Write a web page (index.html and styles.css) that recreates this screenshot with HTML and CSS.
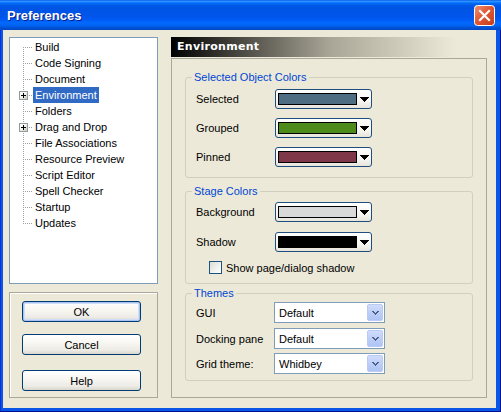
FILE: index.html
```html
<!DOCTYPE html>
<html>
<head>
<meta charset="utf-8">
<title>Preferences</title>
<link rel="stylesheet" href="styles.css">
</head>
<body>
<div class="window">
  <div class="titlebar">
    <span class="title">Preferences</span>
    <span class="close">
      <svg width="21" height="21" viewBox="0 0 21 21">
        <defs>
          <linearGradient id="cg" x1="0" y1="0" x2="1" y2="1">
            <stop offset="0" stop-color="#EE9274"/>
            <stop offset="0.45" stop-color="#E05A36"/>
            <stop offset="1" stop-color="#C43A17"/>
          </linearGradient>
        </defs>
        <rect x="0.5" y="0.5" width="20" height="20" rx="3" fill="url(#cg)" stroke="#fff"/>
        <path d="M6 6 L15 15 M15 6 L6 15" stroke="#fff" stroke-width="2.2" stroke-linecap="square"/>
      </svg>
    </span>
  </div>
  <div class="client">
    <div class="leftcol">
      <ul class="tree">
        <li class="item first"><span class="gut"></span><span class="lbl">Build</span></li>
        <li class="item"><span class="gut"></span><span class="lbl">Code Signing</span></li>
        <li class="item"><span class="gut"></span><span class="lbl">Document</span></li>
        <li class="item"><span class="gut"><span class="plus"></span></span><span class="lbl sel">Environment</span></li>
        <li class="item"><span class="gut"></span><span class="lbl">Folders</span></li>
        <li class="item"><span class="gut"><span class="plus"></span></span><span class="lbl">Drag and Drop</span></li>
        <li class="item"><span class="gut"></span><span class="lbl">File Associations</span></li>
        <li class="item"><span class="gut"></span><span class="lbl">Resource Preview</span></li>
        <li class="item"><span class="gut"></span><span class="lbl">Script Editor</span></li>
        <li class="item"><span class="gut"></span><span class="lbl">Spell Checker</span></li>
        <li class="item"><span class="gut"></span><span class="lbl">Startup</span></li>
        <li class="item last"><span class="gut"></span><span class="lbl">Updates</span></li>
      </ul>
      <div class="btnbox">
        <button class="btn btn-default">OK</button>
        <button class="btn btn-cancel">Cancel</button>
        <button class="btn btn-help">Help</button>
      </div>
    </div>
    <div class="rightcol">
      <div class="header">Environment</div>
      <div class="panel">
        <fieldset class="group g1">
          <legend>Selected Object Colors</legend>
          <div class="row r-first"><span class="label">Selected</span><span class="ccombo"><span class="swatch sw-selected"></span><svg class="tri" width="9" height="5" viewBox="0 0 9 5"><rect x="0" y="0" width="9" height="1"/><rect x="1" y="1" width="7" height="1"/><rect x="2" y="2" width="5" height="1"/><rect x="3" y="3" width="3" height="1"/><rect x="4" y="4" width="1" height="1"/></svg></span></div>
          <div class="row"><span class="label">Grouped</span><span class="ccombo"><span class="swatch sw-grouped"></span><svg class="tri" width="9" height="5" viewBox="0 0 9 5"><rect x="0" y="0" width="9" height="1"/><rect x="1" y="1" width="7" height="1"/><rect x="2" y="2" width="5" height="1"/><rect x="3" y="3" width="3" height="1"/><rect x="4" y="4" width="1" height="1"/></svg></span></div>
          <div class="row"><span class="label">Pinned</span><span class="ccombo"><span class="swatch sw-pinned"></span><svg class="tri" width="9" height="5" viewBox="0 0 9 5"><rect x="0" y="0" width="9" height="1"/><rect x="1" y="1" width="7" height="1"/><rect x="2" y="2" width="5" height="1"/><rect x="3" y="3" width="3" height="1"/><rect x="4" y="4" width="1" height="1"/></svg></span></div>
        </fieldset>
        <fieldset class="group g2">
          <legend>Stage Colors</legend>
          <div class="row r-first"><span class="label">Background</span><span class="ccombo"><span class="swatch sw-bg"></span><svg class="tri" width="9" height="5" viewBox="0 0 9 5"><rect x="0" y="0" width="9" height="1"/><rect x="1" y="1" width="7" height="1"/><rect x="2" y="2" width="5" height="1"/><rect x="3" y="3" width="3" height="1"/><rect x="4" y="4" width="1" height="1"/></svg></span></div>
          <div class="row r-shadow"><span class="label">Shadow</span><span class="ccombo"><span class="swatch sw-shadow"></span><svg class="tri" width="9" height="5" viewBox="0 0 9 5"><rect x="0" y="0" width="9" height="1"/><rect x="1" y="1" width="7" height="1"/><rect x="2" y="2" width="5" height="1"/><rect x="3" y="3" width="3" height="1"/><rect x="4" y="4" width="1" height="1"/></svg></span></div>
          <div class="checkrow"><span class="checkbox"></span><span>Show page/dialog shadow</span></div>
        </fieldset>
        <fieldset class="group g3">
          <legend>Themes</legend>
          <div class="drow d-first"><span class="label">GUI</span><span class="dd"><span class="ddtxt">Default</span><span class="ddbtn"><svg width="7" height="4" viewBox="0 0 7 4"><rect x="0" y="0" width="2" height="1"/><rect x="5" y="0" width="2" height="1"/><rect x="1" y="1" width="2" height="1"/><rect x="4" y="1" width="2" height="1"/><rect x="2" y="2" width="3" height="1"/><rect x="3" y="3" width="1" height="1"/></svg></span></span></div>
          <div class="drow d-second"><span class="label">Docking pane</span><span class="dd"><span class="ddtxt">Default</span><span class="ddbtn"><svg width="7" height="4" viewBox="0 0 7 4"><rect x="0" y="0" width="2" height="1"/><rect x="5" y="0" width="2" height="1"/><rect x="1" y="1" width="2" height="1"/><rect x="4" y="1" width="2" height="1"/><rect x="2" y="2" width="3" height="1"/><rect x="3" y="3" width="1" height="1"/></svg></span></span></div>
          <div class="drow d-third"><span class="label">Grid theme:</span><span class="dd"><span class="ddtxt">Whidbey</span><span class="ddbtn"><svg width="7" height="4" viewBox="0 0 7 4"><rect x="0" y="0" width="2" height="1"/><rect x="5" y="0" width="2" height="1"/><rect x="1" y="1" width="2" height="1"/><rect x="4" y="1" width="2" height="1"/><rect x="2" y="2" width="3" height="1"/><rect x="3" y="3" width="1" height="1"/></svg></span></span></div>
        </fieldset>
      </div>
    </div>
  </div>
</div>
</body>
</html>
```

FILE: styles.css
```css
html, body {
  margin: 0;
  padding: 0;
  background: #ECE9D8;
}
body {
  font-family: "Liberation Sans", Arial, sans-serif;
  font-size: 11px;
  color: #000;
}
.window {
  width: 501px;
  height: 412px;
  display: flex;
  flex-direction: column;
  background: #0A56E6;
  box-shadow: inset -1px -1px 0 #00138C, inset 1px 0 0 #0831D9;
  box-sizing: border-box;
}
.titlebar {
  height: 30px;
  flex: none;
  display: flex;
  align-items: center;
  justify-content: space-between;
  padding: 0 6px 0 7px;
  background: linear-gradient(to bottom,
    #0058EE 0%, #3593FF 4%, #288EFF 6%, #127DFF 8%, #036FFC 10%,
    #0262EE 14%, #0057E5 20%, #0054E3 24%, #0055EB 56%, #005BF5 66%,
    #026AFE 76%, #0062EF 86%, #0052D6 92%, #0048C6 100%);
  box-sizing: border-box;
}
.title {
  font-family: "Liberation Sans", Arial, sans-serif;
  font-weight: bold;
  font-size: 13px;
  color: #fff;
  text-shadow: 1px 1px 0 #0A1E8C;
  padding-top: 1px;
}
.close {
  display: block;
  width: 21px;
  height: 21px;
  margin-top: 1px;
}
.close svg { display: block; }

.client {
  flex: 1;
  margin: 0 5px 4px 3px;
  background: #ECE9D8;
  display: flex;
  gap: 13px;
  padding: 7px 9px 10px 6px;
}

/* left column */
.leftcol {
  width: 149px;
  display: flex;
  flex-direction: column;
  gap: 8px;
}
.tree {
  list-style: none;
  margin: 0;
  padding: 1px 0 0 0;
  height: 247px;
  box-sizing: border-box;
  border: 1px solid #7F9DB9;
  background: #fff;
}
.item {
  display: flex;
  height: 16px;
  align-items: center;
}
.gut {
  position: relative;
  width: 23px;
  height: 16px;
  flex: none;
}
.gut::before {
  content: "";
  position: absolute;
  left: 13px;
  top: 0;
  width: 1px;
  height: 16px;
  background: repeating-linear-gradient(to bottom, #A0A0A0 0 1px, transparent 1px 2px);
}
.first .gut::before { top: 8px; height: 8px; }
.last .gut::before { height: 9px; }
.gut::after {
  content: "";
  position: absolute;
  left: 15px;
  top: 8px;
  width: 8px;
  height: 1px;
  background: repeating-linear-gradient(to right, #A0A0A0 0 1px, transparent 1px 2px);
}
.plus {
  position: absolute;
  left: 9px;
  top: 4px;
  width: 9px;
  height: 9px;
  box-sizing: border-box;
  border: 1px solid #919B9C;
  background:
    linear-gradient(#000, #000) center / 5px 1px no-repeat,
    linear-gradient(#000, #000) center / 1px 5px no-repeat,
    linear-gradient(135deg, #fff 0%, #F2F2EE 50%, #C8C8BC 100%);
  z-index: 1;
}
.lbl {
  height: 16px;
  line-height: 16px;
  padding: 0 2px;
  white-space: nowrap;
}
.lbl.sel {
  background: #316AC5;
  color: #fff;
}

.btnbox {
  height: 106px;
  box-sizing: border-box;
  border: 1px solid #ACA899;
  box-shadow: inset 1px 1px 0 #fff;
  padding: 8px 0 0 12px;
  display: flex;
  flex-direction: column;
  align-items: flex-start;
}
.btn {
  width: 119px;
  height: 21px;
  box-sizing: border-box;
  border: 1px solid #003C74;
  border-radius: 3px;
  background: linear-gradient(to bottom, #FFFFFF 0%, #F8F7F2 40%, #ECEBE5 80%, #D9D6CB 100%);
  font-family: "Liberation Sans", Arial, sans-serif;
  font-size: 11px;
  color: #000;
  padding: 0;
  margin: 0;
}
.btn-default {
  box-shadow: inset 0 0 0 1px #A8C3F0, inset 0 0 0 2px #CFDFFB;
}
.btn-cancel { margin-top: 12px; }
.btn-help { margin-top: 15px; }

/* right column */
.rightcol {
  width: 316px;
  display: flex;
  flex-direction: column;
}
.header {
  height: 20px;
  line-height: 20px;
  padding-left: 6px;
  background: linear-gradient(to right, #000 0%, #A8A596 50%, #ECE9D8 90%);
  color: #fff;
  font-family: "DejaVu Sans", Verdana, sans-serif;
  font-weight: bold;
  font-size: 11px;
  letter-spacing: 0.3px;
}
.panel {
  flex: 1;
  margin-top: 1px;
  border: 1px solid #ACA899;
  padding: 12px 13px 0 13px;
  display: flex;
  flex-direction: column;
}
.group {
  margin: 0;
  border: 1px solid #D0D0BF;
  border-radius: 3px;
  padding: 0 0 0 10px;
  min-width: 0;
}
.group legend {
  color: #0046D5;
  padding: 0 2px;
  margin-left: -4px;
  line-height: 13px;
  font-size: 11px;
}
.g1 { padding-top: 5px; padding-bottom: 10px; }
.g2 { margin-top: 7px; padding-top: 4px; padding-bottom: 9px; }
.g3 { margin-top: 3px; padding-top: 2px; padding-bottom: 6px; }

.row {
  display: flex;
  align-items: center;
  height: 20px;
  margin-top: 9px;
}
.row.r-first { margin-top: 0; }
.row.r-shadow { margin-top: 10px; }
.label {
  width: 79px;
  flex: none;
  white-space: nowrap;
}
.ccombo {
  width: 97px;
  height: 20px;
  box-sizing: border-box;
  border: 1px solid #1E4D7E;
  border-radius: 3px;
  background: linear-gradient(to bottom, #FFFFFF 0%, #F7F6F2 60%, #E6E4DA 100%);
  display: flex;
  align-items: center;
  padding-left: 2px;
}
.swatch {
  width: 79px;
  height: 12px;
  box-sizing: border-box;
  border: 1px solid #000;
  flex: none;
}
.sw-selected { background: #4E6C82; }
.sw-grouped { background: #4C8A1A; }
.sw-pinned { background: #7E3848; }
.sw-bg { background: #D9D9D9; }
.sw-shadow { background: #000; }
.tri {
  display: block;
  margin-left: 3px;
  fill: #000;
  shape-rendering: crispEdges;
}
.checkrow {
  display: flex;
  align-items: center;
  height: 13px;
  margin-top: 9px;
  padding-left: 13px;
  gap: 4px;
}
.checkbox {
  width: 13px;
  height: 13px;
  box-sizing: border-box;
  border: 1px solid #1C5180;
  background: linear-gradient(135deg, #DCDCD7 0%, #F0F0EC 55%, #FFFFFF 100%);
  flex: none;
}
.drow {
  display: flex;
  align-items: center;
  height: 21px;
}
.drow .label { width: 78px; }
.d-second { margin-top: 5px; }
.d-third { margin-top: 4px; }
.dd {
  width: 111px;
  height: 21px;
  box-sizing: border-box;
  border: 1px solid #7F9DB9;
  background: #fff;
  display: flex;
  align-items: center;
  justify-content: space-between;
  padding: 1px;
}
.ddtxt {
  padding-left: 3px;
}
.ddbtn {
  width: 16px;
  height: 17px;
  box-sizing: border-box;
  border: 1px solid #B9CBF4;
  border-radius: 2px;
  background: linear-gradient(to bottom, #D0DCFB 0%, #BDCFF9 50%, #AFC4F4 100%);
  display: flex;
  align-items: center;
  justify-content: center;
}
.ddbtn svg {
  display: block;
  fill: #4D6185;
  shape-rendering: crispEdges;
  margin-top: 1px;
}
```
